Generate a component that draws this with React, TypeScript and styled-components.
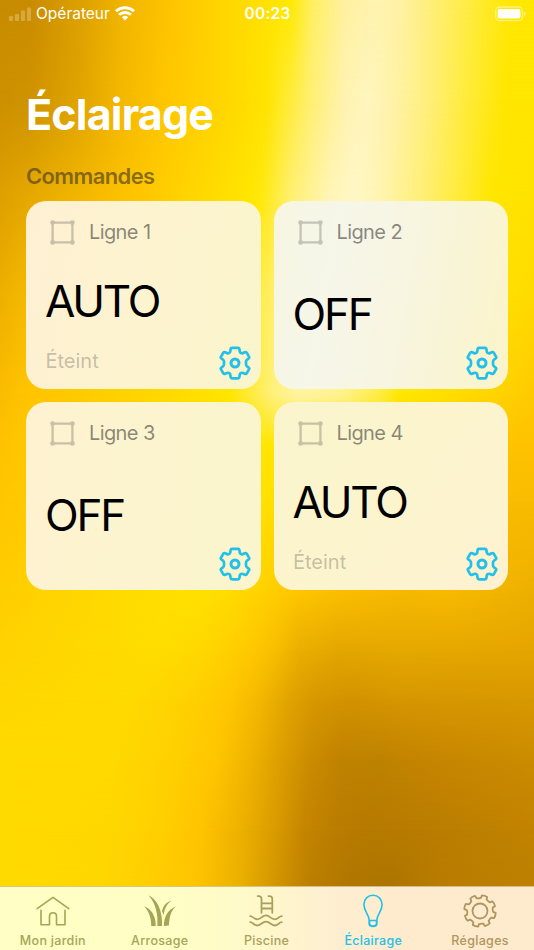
import React from "react";
import styled, { createGlobalStyle } from "styled-components";

const GlobalStyle = createGlobalStyle`
  * { box-sizing: border-box; }
  body { margin: 0; font-family: Inter, "Liberation Sans", sans-serif; }
  h1, h2, p { margin: 0; }
  button { border: 0; padding: 0; background: none; font: inherit; color: inherit; }
  svg { display: block; }
`;

/* The wallpaper is a colour mesh: each band holds a horizontal gradient
   that fades in between the previous band's height and its own. */
const bands: { y: number; stops: string }[] = [
  { y: 0, stops: "#c88c00 0, #c98c00 30px, #dca000 80px, #f0b400 120px, #ffc400 170px, #ffd800 230px, #ffe200 267px, #ffe900 290px, #ffef60 312px, #fff1a0 345px, #fff3b0 375px, #fff2a5 400px, #ffef80 425px, #ffed50 460px, #ffea20 490px, #ffe700 515px" },
  { y: 100, stops: "#cc9000 0, #cf9300 30px, #e0a400 80px, #f3b700 120px, #ffc600 165px, #ffd200 210px, #ffe300 267px, #ffe920 280px, #ffef70 310px, #fff3b0 345px, #fff5be 367px, #fff3ac 390px, #ffef80 425px, #ffec45 460px, #ffe818 490px, #ffe600 505px" },
  { y: 200, stops: "#dfa000 0, #e8ac00 40px, #f8bc00 100px, #ffc600 140px, #ffd800 200px, #ffe600 250px, #ffe90f 262px, #ffef70 290px, #fff5b8 330px, #fff6c6 355px, #fff4b0 380px, #ffef78 420px, #ffeb38 460px, #ffe600 490px, #ffe200 534px" },
  { y: 300, stops: "#eeb000 0, #f4b800 20px, #ffc400 80px, #ffd400 160px, #ffe500 230px, #ffea20 250px, #ffee60 267px, #fff8d0 330px, #fff5bc 370px, #ffef80 410px, #ffea30 450px, #ffe200 480px, #ffda00 534px" },
  { y: 395, stops: "#fbbc00 0, #ffc400 26px, #ffce00 100px, #ffdc00 180px, #ffe600 230px, #fff07a 272px, #fff4a0 300px, #fff28c 340px, #ffec40 380px, #ffe600 400px, #ffdd00 450px, #ffca00 534px" },
  { y: 445, stops: "#ffc200 0, #ffc800 26px, #ffda00 160px, #ffe600 265px, #ffe500 300px, #ffd800 400px, #ffc200 520px" },
  { y: 500, stops: "#ffc600 0, #ffc900 26px, #ffdc00 150px, #ffe300 250px, #ffe000 270px, #ffc800 400px, #fabc00 510px" },
  { y: 590, stops: "#ffcd00 0, #ffd400 60px, #ffdc00 130px, #ffe100 200px, #ffdc00 230px, #ffd000 267px, #ffc600 300px, #fbbf00 340px, #f6b900 400px, #f8bb00 450px, #edb000 534px" },
  { y: 650, stops: "#ffd200 0, #ffd800 80px, #ffdd00 160px, #ffd800 200px, #ffc900 250px, #f8be00 275px, #eaae00 300px, #e4a600 340px, #e6a800 400px, #e5a500 534px" },
  { y: 700, stops: "#ffd700 0, #ffda00 130px, #ffd000 190px, #ffc600 230px, #f4b700 260px, #e0a200 290px, #d69700 315px, #d29200 350px, #d69600 400px, #d89800 534px" },
  { y: 760, stops: "#ffda00 0, #ffd900 110px, #ffd000 170px, #ffc600 215px, #f0b300 250px, #dc9e00 280px, #cb8c00 310px, #c08200 340px, #be8200 380px, #c68500 430px, #cb8c00 534px" },
  { y: 830, stops: "#ffda00 0, #ffd700 110px, #ffcf00 160px, #ffc400 200px, #eeb100 240px, #d99b00 275px, #c48500 305px, #bb7d00 335px, #b67a00 370px, #b97c00 420px, #c28300 534px" },
  { y: 885, stops: "#ffda00 0, #ffd700 100px, #ffcd00 150px, #ffc400 195px, #eab000 240px, #cf9200 280px, #bb7e00 310px, #af7600 350px, #ac7400 390px, #b87c00 440px, #bd8000 534px" },
];

const Screen = styled.div`
  display: grid;
  width: 534px;
  height: 950px;
  overflow: hidden;
  > * { grid-area: 1 / 1; }
`;

const Band = styled.div<{ $stops: string; $from: number; $to: number }>`
  background: linear-gradient(to right, ${(p) => p.$stops});
  ${(p) => p.$to > 0 && `mask-image: linear-gradient(to bottom, transparent ${p.$from}px, #000 ${p.$to}px);`}
`;

const Content = styled.div`
  display: flex;
  flex-direction: column;
  z-index: 1;
`;

const StatusBar = styled.header`
  display: grid;
  grid-template-columns: 1fr auto 1fr;
  align-items: center;
  height: 27px;
  padding: 0 8px 0 9px;
  color: #fff;
  font-size: 15.5px;
`;

const Carrier = styled.div`
  display: flex;
  align-items: center;
  gap: 5px;
`;

const Clock = styled.time`
  font-weight: 600;
  letter-spacing: 0.2px;
`;

const BatterySlot = styled.div`
  display: flex;
  justify-content: flex-end;
`;

const Main = styled.main`
  flex: 1;
  padding: 59px 26px 0;
`;

const Title = styled.h1`
  color: #fff;
  font-size: 43px;
  line-height: 56px;
  font-weight: 700;
  letter-spacing: -0.8px;
`;

const SectionTitle = styled.h2`
  margin-top: 20px;
  color: rgba(60, 50, 40, 0.6);
  font-size: 22px;
  line-height: 28px;
  font-weight: 600;
  letter-spacing: -0.62px;
`;

const CardGrid = styled.section`
  display: grid;
  grid-template-columns: 1fr 1fr;
  gap: 13px;
  margin-top: 11.4px;
`;

const Card = styled.article<{ $tint: string }>`
  display: flex;
  flex-direction: column;
  height: 188px;
  padding: 17px 10px 9px 20px;
  border-radius: 20px;
  background: ${(p) => p.$tint};
`;

const CardHeader = styled.div`
  display: flex;
  align-items: center;
  gap: 14px;
  height: 28px;
  padding-left: 4px;
  color: rgba(60, 60, 60, 0.6);
  font-size: 20px;
  letter-spacing: -0.6px;
`;

const State = styled.p`
  flex: 1;
  display: flex;
  align-items: center;
  margin-left: -1px;
  padding-top: 10px;
  color: #000;
  font-size: 44px;
  line-height: 52px;
  letter-spacing: -2.2px;
  font-weight: 370;
`;

const CardFooter = styled.div<{ $overlap: boolean }>`
  display: flex;
  align-items: center;
  justify-content: space-between;
  height: 34px;
  ${(p) => p.$overlap && "margin-top: -25px;"}
`;

const Detail = styled.span`
  margin-top: -4px;
  margin-left: -0.5px;
  color: rgba(60, 60, 60, 0.3);
  font-size: 20px;
`;

const SettingsButton = styled.button`
  margin-left: auto;
  color: #23c0e9;
`;

const TabBar = styled.nav`
  display: grid;
  grid-template-columns: repeat(5, 1fr);
  height: 64px;
  border-top: 1px solid rgba(150, 120, 40, 0.4);
  background: linear-gradient(to right, #ffffc5 0, #ffffc5 170px, #fff9ca 250px, #feefd0 330px, #feebce 400px, #feebcd 534px);
`;

const Tab = styled.button<{ $color: string }>`
  display: flex;
  flex-direction: column;
  align-items: center;
  gap: 3.5px;
  padding: 7px 1px 0 0;
  color: ${(p) => p.$color};
  font-size: 12.5px;
  line-height: 18px;
  font-weight: 500;
  letter-spacing: 0.3px;
`;

const Signal = () => (
  <svg width="22" height="14" viewBox="0 0 22 14" fill="#fff" opacity=".25">
    <rect x="0" y="9" width="4" height="5" rx="1" />
    <rect x="6" y="7" width="4" height="7" rx="1" />
    <rect x="12" y="3.5" width="4" height="10.5" rx="1" />
    <rect x="18" y="0.5" width="4" height="13.5" rx="1" />
  </svg>
);

const Wifi = () => (
  <svg width="20" height="15" viewBox="0 0 20 15" fill="none" stroke="#fff" strokeWidth="2.8">
    <path d="M1 5.3a13.2 13.2 0 0 1 18 0" />
    <path d="M4.1 8.8a8.7 8.7 0 0 1 11.8 0" />
    <path d="M6.8 11.2a4.7 4.7 0 0 1 6.4 0L10 14.5z" fill="#fff" stroke="none" />
  </svg>
);

const Battery = () => (
  <svg width="31" height="16" viewBox="0 0 31 16" fill="none">
    <rect x=".7" y="1" width="26.8" height="13.6" rx="3.8" stroke="#fff" strokeOpacity=".45" strokeWidth="1.3" />
    <rect x="2.7" y="3" width="22.8" height="9.6" rx="2" fill="#fff" />
    <path d="M29 5.5c2.2.8 2.2 4 0 4.8z" fill="#fff" fillOpacity=".5" />
  </svg>
);

const Frame = () => (
  <svg width="25" height="25" viewBox="0 0 25 25" fill="none" stroke="#3c3c3c" strokeWidth="2.3" opacity=".27">
    <path d="M2.6 2.6h19.8v19.8H2.6z" />
    <g fill="#3c3c3c" stroke="none">
      <circle cx="2.6" cy="2.6" r="2.4" />
      <circle cx="22.4" cy="2.6" r="2.4" />
      <circle cx="2.6" cy="22.4" r="2.4" />
      <circle cx="22.4" cy="22.4" r="2.4" />
    </g>
  </svg>
);

const Cog = () => (
  <svg width="32" height="34" viewBox="0 0 32 34" fill="none" stroke="currentColor" strokeWidth="2.7" strokeLinejoin="round">
    <path d="M11.6 3Q11.8 1.8 13 1.8h6q1.2 0 1.4 1.2l.3 2.300q.2 1.300 1.300 1.800t2.100-.1l1.700-.8q1.200-.5 1.900.5l2.300 4q.6 1-.4 1.800l-1.600 1.200q-1 .8-1 2v2.600q0 1.200 1 2l1.600 1.200q1 .8.4 1.800l-2.300 4q-.7 1-1.900.5l-1.700-.8q-1-.5-2.100 0t-1.300 1.800l-.3 2.300q-.2 1.200-1.400 1.200h-6q-1.200 0-1.400-1.200l-.3-2.300q-.2-1.300-1.300-1.800t-2.100 0l-1.700.8q-1.200.5-1.900-.5l-2.300-4q-.6-1 .4-1.800l1.600-1.200q1-.8 1-2v-2.600q0-1.200-1-2l-1.600-1.200q-1-.8-.4-1.800l2.300-4q.7-1 1.900-.5l1.700.8q1 .6 2.100.1t1.300-1.800z" />
    <circle cx="16" cy="17" r="4" strokeWidth="3" />
  </svg>
);

const House = () => (
  <svg width="34" height="34" viewBox="0 0 34 34" fill="none" stroke="currentColor" strokeWidth="1.6" strokeLinecap="round" strokeLinejoin="round">
    <path d="M1.2 14.7 17 3.3l15.8 11.4" />
    <path d="M5 16.3v14.4h8.5v-8.5c0-4.7 7-4.7 7 0v8.5H29V16.3" />
  </svg>
);

const Grass = () => (
  <svg width="34" height="34" viewBox="0 0 34 34" fill="currentColor">
    <path d="M5.4 1.3C14 5 19.8 16.500 19 32h-4.700C15.300 20 12.500 9 5.400 1.300z" />
    <path d="M1 12.200c7.400 2.600 11.800 9.500 11.700 19.800H8.200C8.400 24.600 6.200 17.500 1 12.200z" />
    <path d="M28.500 6.500c-5 4-6.800 7.500-7.800 14.500L19 17.300C20 12 23 8.300 28.500 6.500z" />
    <path d="M33 12.600c-4.900 4-6.300 9-7.200 18.900l-4.900.5C21 22 25.300 15.200 33 12.600z" />
  </svg>
);

const Pool = () => (
  <svg width="34" height="34" viewBox="0 0 34 34" fill="none" stroke="currentColor" strokeWidth="1.8" strokeLinecap="round">
    <path d="M8.700 2.200c2.700-.4 3.800.7 3.800 3v13.600M19.500 2.200c2.700-.4 3.800.7 3.800 3v13.600M12.500 9.300h10.800M12.500 14.500h10.800" />
    <path d="M1.200 22.200c2.800 0 3.700 3.100 7.100 3.100 3.900 0 4.700-3.900 8.700-3.900s4.800 3.900 8.700 3.900c3.400 0 4.300-3.100 7.100-3.100M1.200 28.200c2.800 0 3.700 3.300 7.100 3.300 3.900 0 4.700-3.900 8.700-3.900s4.800 3.900 8.700 3.900c3.400 0 4.300-3.300 7.100-3.300" />
  </svg>
);

const Bulb = () => (
  <svg width="34" height="34" viewBox="0 0 34 34" fill="none" stroke="currentColor" strokeWidth="1.600" strokeLinejoin="round">
    <path d="M13.300 26.500C12.900 20.300 7.900 17.500 7.900 10.500c0-5.400 4-9.200 9.100-9.200s9.100 3.800 9.100 9.200c0 7-5 9.800-5.400 16z" />
    <path d="M13.300 26.500v3.200c0 3.300 7.400 3.300 7.400 0v-3.200" strokeWidth="2" />
  </svg>
);

const point = (r: number, deg: number) => {
  const a = (deg * Math.PI) / 180;
  return `${(17 + r * Math.sin(a)).toFixed(2)} ${(17 - r * Math.cos(a)).toFixed(2)}`;
};

const gearOutline =
  "M" +
  Array.from({ length: 8 }, (_, i) => 17 + i * 45)
    .map((c) => `${point(13.2, c - 13)} L${point(15.8, c - 10)} Q${point(16.4, c)} ${point(15.8, c + 10)} L${point(13.2, c + 13)} Q${point(12.4, c + 22.5)} ${point(13.2, c + 32)}`)
    .join(" L") +
  "Z";

const Gear = () => (
  <svg width="34" height="34" viewBox="0 0 34 34" fill="none" stroke="currentColor" strokeWidth="1.8" strokeLinejoin="round">
    <path d={gearOutline} />
    <circle cx="17" cy="17" r="7.500" />
  </svg>
);

const lines = [
  { name: "Ligne 1", state: "AUTO", detail: "Éteint", tint: "linear-gradient(100deg, #fff0d3, #fdf3d0 40%, #faf5cc)" },
  { name: "Ligne 2", state: "OFF", detail: "", tint: "linear-gradient(100deg, #f7f6e2, #f6f6e9 25%, #f8f5e0 55%, #fbf4c9)" },
  { name: "Ligne 3", state: "OFF", detail: "", tint: "linear-gradient(95deg, #fff2d0, #fcf4cf 40%, #faf5cc)" },
  { name: "Ligne 4", state: "AUTO", detail: "Éteint", tint: "linear-gradient(130deg, #faf5cc, #fcf4ce 60%, #fff1d0)" },
];

const tabs = [
  { label: "Mon jardin", color: "#a5a555", icon: <House /> },
  { label: "Arrosage", color: "#a5a555", icon: <Grass /> },
  { label: "Piscine", color: "#aaa05b", icon: <Pool /> },
  { label: "Éclairage", color: "#23c0e9", icon: <Bulb /> },
  { label: "Réglages", color: "#b0955f", icon: <Gear /> },
];

export default function App() {
  return (
    <Screen>
      <GlobalStyle />
      {bands.map((b, i) => (
        <Band key={b.y} $stops={b.stops} $from={i ? bands[i - 1].y : 0} $to={b.y} />
      ))}
      <Content>
        <StatusBar>
          <Carrier>
            <Signal />
            Opérateur
            <Wifi />
          </Carrier>
          <Clock>00:23</Clock>
          <BatterySlot>
            <Battery />
          </BatterySlot>
        </StatusBar>
        <Main>
          <Title>Éclairage</Title>
          <SectionTitle>Commandes</SectionTitle>
          <CardGrid>
            {lines.map((l) => (
              <Card key={l.name} $tint={l.tint}>
                <CardHeader>
                  <Frame />
                  {l.name}
                </CardHeader>
                <State>{l.state}</State>
                <CardFooter $overlap={!l.detail}>
                  {l.detail && <Detail>{l.detail}</Detail>}
                  <SettingsButton aria-label={`Réglages ${l.name}`}>
                    <Cog />
                  </SettingsButton>
                </CardFooter>
              </Card>
            ))}
          </CardGrid>
        </Main>
        <TabBar>
          {tabs.map((t) => (
            <Tab key={t.label} $color={t.color}>
              {t.icon}
              {t.label}
            </Tab>
          ))}
        </TabBar>
      </Content>
    </Screen>
  );
}
